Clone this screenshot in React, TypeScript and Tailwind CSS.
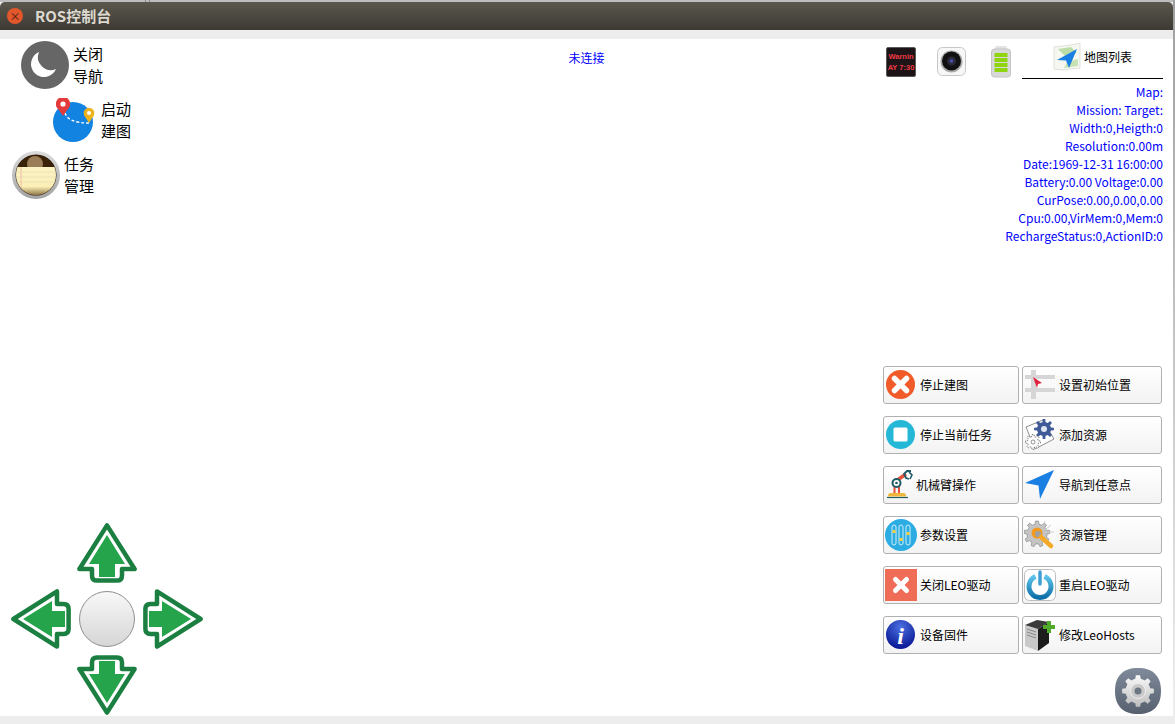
import type { ReactNode } from "react";

// builds a toothed wheel outline for the gear icons
function gearPath(cx: number, cy: number, outer: number, inner: number, teeth: number) {
  const step = (Math.PI * 2) / teeth;
  const pts: string[] = [];
  for (let i = 0; i < teeth; i++) {
    const a = i * step - Math.PI / 2;
    const list: [number, number][] = [
      [inner, a - step * 0.5],
      [inner, a - step * 0.28],
      [outer, a - step * 0.17],
      [outer, a + step * 0.17],
      [inner, a + step * 0.28],
    ];
    list.forEach(([r, t]) => {
      pts.push(`${(cx + r * Math.cos(t)).toFixed(2)} ${(cy + r * Math.sin(t)).toFixed(2)}`);
    });
  }
  return `M${pts.join("L")}Z`;
}

const XMark = ({ c = 16, size = 6, w = 5 }: { c?: number; size?: number; w?: number }) => (
  <path
    d={`M${c - size} ${c - size}L${c + size} ${c + size}M${c + size} ${c - size}L${c - size} ${c + size}`}
    stroke="#fff"
    strokeWidth={w}
    strokeLinecap="round"
  />
);

const Ico = ({ children }: { children: ReactNode }) => (
  <svg viewBox="0 0 32 32" className="w-8 h-8 shrink-0">
    {children}
  </svg>
);

const StopMapIcon = () => (
  <Ico>
    <circle cx="15.5" cy="15.5" r="14.5" fill="#f15a29" />
    <XMark c={15.5} size={6} w={5.5} />
  </Ico>
);

const InitPoseIcon = () => (
  <Ico>
    <path d="M1 6H31V10H1ZM7 1H12V30H7ZM12 19H31V23H12ZM1 19H7V23H1Z" fill="#d6d6d6" />
    <path d="M9 8L18 14L14 15L13 19Z" fill="#e2203f" />
  </Ico>
);

const StopTaskIcon = () => (
  <Ico>
    <circle cx="15.5" cy="15.5" r="14.5" fill="#25b8d6" />
    <rect x="8.5" y="8.5" width="14" height="14" rx="1.5" fill="#fff" />
  </Ico>
);

const AddResIcon = () => (
  <Ico>
    <path d="M2 8L19 1L30 20L11 30Z" fill="#fff" stroke="#8f8f8f" strokeWidth="1" />
    <path d={gearPath(20, 10, 10, 7, 8)} fill="#3f5a96" />
    <circle cx="20" cy="10" r="3" fill="#dfe6f2" />
    <path d={gearPath(9, 23, 7.5, 5.5, 8)} fill="#fff" stroke="#555" strokeWidth="0.8" strokeDasharray="1.5 1" />
    <circle cx="9" cy="23" r="2" fill="#fff" stroke="#666" strokeWidth="0.7" />
  </Ico>
);

const ArmIcon = () => (
  <svg viewBox="0 0 28 32" className="w-[28px] h-8 shrink-0">
    <path d="M2 28.5H23" stroke="#1f5a66" strokeWidth="1.2" />
    <path d="M3 26.5Q3 24 6 24H18Q21 24 21 26.5V27.5H3Z" fill="#f0b73c" />
    <path d="M9.5 24V15M14 24V15" stroke="#e8503a" strokeWidth="2" />
    <path d="M11 12L21 5" stroke="#e8503a" strokeWidth="3.4" />
    <circle cx="11.5" cy="14" r="4" fill="#fff" stroke="#1f5a66" strokeWidth="2" />
    <circle cx="11.5" cy="14" r="1.3" fill="#1f5a66" />
    <path d="M26 2H22L19 5L21 9L24 10" fill="none" stroke="#1f5a66" strokeWidth="1.8" />
    <path d="M24 3L27 6L25 10" fill="none" stroke="#1f5a66" strokeWidth="1.6" />
  </svg>
);

const NavIcon = () => (
  <Ico>
    <path d="M30 1L1 14L14.5 16.5L16 30Z" fill="#1a7fe3" />
  </Ico>
);

const ParamsIcon = () => (
  <Ico>
    <circle cx="16" cy="16" r="16" fill="#2bace2" />
    {[9, 16, 23].map((x) => (
      <rect key={x} x={x - 2} y="6" width="4" height="20" rx="2" fill="none" stroke="#cfeef9" strokeWidth="1" />
    ))}
    <rect x="7.5" y="11" width="3" height="3" fill="#f4d03f" />
    <rect x="14.5" y="19" width="3" height="3" fill="#f4d03f" />
    <rect x="21.5" y="13" width="3" height="3" fill="#f4d03f" />
  </Ico>
);

const ManageIcon = () => (
  <Ico>
    <path d={gearPath(13, 15, 13, 10, 9)} fill="#c4c4c4" stroke="#7d7d7d" strokeWidth="0.6" />
    <path d="M21 2L18 9M27 6L21 11M30 13H24" stroke="#c9c9c9" strokeWidth="1" />
    <circle cx="13" cy="14" r="5.5" fill="#f29a1f" />
    <circle cx="14" cy="15" r="3" fill="#9aa0a6" />
    <path d="M17 18L27 27" stroke="#f4a928" strokeWidth="4.5" strokeLinecap="round" />
  </Ico>
);

const CloseDriverIcon = () => (
  <Ico>
    <rect x="0" y="0" width="32" height="32" fill="#ef6c57" />
    <XMark c={16} size={5.5} w={5} />
  </Ico>
);

const PowerIcon = () => (
  <Ico>
    <defs>
      <linearGradient id="pw" x1="0" y1="0" x2="0" y2="1">
        <stop offset="0" stopColor="#5ec4ea" />
        <stop offset="1" stopColor="#0f6fa8" />
      </linearGradient>
    </defs>
    <rect x="0.5" y="0.5" width="31" height="31" rx="5" fill="#fff" stroke="#bdbdbd" />
    <path d="M11.5 7.5A11 11 0 1 0 20.5 7.5" fill="none" stroke="url(#pw)" strokeWidth="5" />
    <path d="M16 3V15" stroke="#3f9fd3" strokeWidth="3.5" strokeLinecap="round" />
  </Ico>
);

const InfoIcon = () => (
  <Ico>
    <defs>
      <radialGradient id="inf" cx="0.5" cy="0.25" r="0.8">
        <stop offset="0" stopColor="#4a6fe0" />
        <stop offset="1" stopColor="#04108f" />
      </radialGradient>
    </defs>
    <circle cx="15.5" cy="15.5" r="14.5" fill="url(#inf)" />
    <text x="15.5" y="25" textAnchor="middle" fontSize="24" fontWeight="700" fontStyle="italic" fontFamily="'Liberation Serif', serif" fill="#fff">
      i
    </text>
  </Ico>
);

const ServerIcon = () => (
  <Ico>
    <path d="M1 6L14 10V32L1 27Z" fill="#c9c9c9" />
    <path d="M3 10L12 13M3 13L12 16M3 16L12 19" stroke="#777" strokeWidth="0.8" />
    <path d="M14 10L25 3V24L14 32Z" fill="#1c1c1c" />
    <path d="M1 6L13 1L25 3L14 10Z" fill="#3a3a3a" />
    <path d="M25 2V14M19 8H31" stroke="#4fa92a" strokeWidth="4" />
  </Ico>
);

const buttons: { label: string; icon: ReactNode }[] = [
  { label: "停止建图", icon: <StopMapIcon /> },
  { label: "设置初始位置", icon: <InitPoseIcon /> },
  { label: "停止当前任务", icon: <StopTaskIcon /> },
  { label: "添加资源", icon: <AddResIcon /> },
  { label: "机械臂操作", icon: <ArmIcon /> },
  { label: "导航到任意点", icon: <NavIcon /> },
  { label: "参数设置", icon: <ParamsIcon /> },
  { label: "资源管理", icon: <ManageIcon /> },
  { label: "关闭LEO驱动", icon: <CloseDriverIcon /> },
  { label: "重启LEO驱动", icon: <PowerIcon /> },
  { label: "设备固件", icon: <InfoIcon /> },
  { label: "修改LeoHosts", icon: <ServerIcon /> },
];

const infoLines = [
  "Map:",
  "Mission: Target:",
  "Width:0,Heigth:0",
  "Resolution:0.00m",
  "Date:1969-12-31 16:00:00",
  "Battery:0.00 Voltage:0.00",
  "CurPose:0.00,0.00,0.00",
  "Cpu:0.00,VirMem:0,Mem:0",
  "RechargeStatus:0,ActionID:0",
];

function Arrow({ className = "" }: { className?: string }) {
  return (
    <svg viewBox="0 0 60 60" className={`w-[60px] h-[60px] ${className}`}>
      <path
        d="M30 2.4L57.6 46H45V52.5Q45 57.6 40 57.6H20Q15 57.6 15 52.5V46H2.4Z"
        fill="#fff"
        stroke="#1c7f42"
        strokeWidth="4.5"
        strokeLinejoin="round"
      />
      <path d="M30 12L48 41H38V54H22V41H12Z" fill="#25a44b" />
    </svg>
  );
}

function MoonIcon() {
  return (
    <svg viewBox="0 0 48 48" className="w-12 h-12 shrink-0">
      <circle cx="24" cy="24" r="24" fill="#666" />
      <path d="M18 11A13 13 0 1 0 35 28A13 13 0 0 1 18 11Z" fill="#fff" />
    </svg>
  );
}

function MappingIcon() {
  return (
    <svg viewBox="0 0 44 44" className="w-11 h-11 shrink-0">
      <circle cx="20" cy="24" r="20" fill="#1283e0" />
      <path d="M12 15Q15 25 36 25" fill="none" stroke="#fff" strokeWidth="1.4" strokeDasharray="3 2" />
      <path d="M10 18L3.5 8.5A7 7 0 1 1 16.5 8.5Z" fill="#e33b3b" />
      <circle cx="10" cy="6" r="7" fill="#e33b3b" />
      <circle cx="10" cy="6" r="2.6" fill="#fff" />
      <path d="M36 25L31 17H41Z" fill="#eeb31c" />
      <circle cx="36" cy="15" r="5.3" fill="#eeb31c" />
      <circle cx="36" cy="15" r="2" fill="#fff" />
    </svg>
  );
}

function NotesIcon() {
  return (
    <svg viewBox="0 0 48 48" className="w-12 h-12 shrink-0">
      <defs>
        <linearGradient id="ring" x1="0" y1="0" x2="0" y2="1">
          <stop offset="0" stopColor="#dcdcdc" />
          <stop offset="1" stopColor="#a2a2a2" />
        </linearGradient>
        <linearGradient id="pad" x1="0" y1="0" x2="0" y2="1">
          <stop offset="0" stopColor="#fdf3c4" />
          <stop offset="0.65" stopColor="#fbeeb6" />
          <stop offset="1" stopColor="#7a5f30" />
        </linearGradient>
        <clipPath id="face">
          <circle cx="24" cy="24" r="20" />
        </clipPath>
      </defs>
      <circle cx="24" cy="24" r="24" fill="url(#ring)" />
      <circle cx="24" cy="24" r="20.5" fill="#2c1808" />
      <g clipPath="url(#face)">
        <rect x="2" y="4" width="44" height="13" fill="#3a2209" />
        <circle cx="23" cy="13" r="8" fill="#9b7d58" />
        <rect x="2" y="16" width="44" height="30" fill="url(#pad)" />
        <path d="M2 21H46M2 26H46M2 31H46" stroke="#e6e0b6" strokeWidth="0.8" />
        <path d="M9 16V44" stroke="#eeb2a0" strokeWidth="0.8" />
      </g>
    </svg>
  );
}

function WarnIcon() {
  return (
    <div className="w-[30px] h-[30px] bg-[#1c1416] border border-[#5a5a5a] rounded-[2px] flex flex-col justify-center items-center text-[#ee3a45] text-[7.5px] leading-[11px] font-bold font-['Liberation_Sans',sans-serif] whitespace-nowrap">
      <span>Warnin</span>
      <span>AY 7:30</span>
    </div>
  );
}

function CameraIcon() {
  return (
    <svg viewBox="0 0 29 29" className="w-[29px] h-[29px]">
      <rect x="0.5" y="0.5" width="28" height="28" rx="5" fill="#f7f7f7" stroke="#c8c8c8" />
      <circle cx="14.5" cy="14.5" r="11" fill="#aaa" />
      <circle cx="14.5" cy="14" r="9.5" fill="#111" />
      <circle cx="14.5" cy="14" r="4.5" fill="#2a2a3a" />
      <circle cx="14.5" cy="14" r="1.8" fill="#4a4fb0" />
    </svg>
  );
}

function BatteryIcon() {
  return (
    <svg viewBox="0 0 22 32" className="w-[22px] h-8">
      <rect x="5" y="0" width="12" height="5" rx="2" fill="#e2e2e2" />
      <rect x="1.5" y="3" width="19" height="28" rx="3" fill="#d8d8d8" stroke="#c4c4c4" />
      {[7, 12, 17, 22].map((y) => (
        <rect key={y} x="4.5" y={y} width="13" height="4" fill="#8fd40e" />
      ))}
    </svg>
  );
}

function MapIcon() {
  return (
    <svg viewBox="0 0 28 28" className="w-7 h-7 shrink-0">
      <path d="M1 4L18 2L27 0V25L9 27L1 26Z" fill="#f7f7f2" stroke="#d4d4d0" strokeWidth="0.7" />
      <path d="M5 6L18 4L24 10L12 13Z" fill="#bcdca8" />
      <path d="M14 19L25 16V23L11 25Z" fill="#c6e2b4" />
      <path d="M24 6L4 17L13 17.5L16 25Z" fill="#1a7fe3" />
    </svg>
  );
}

function SettingsIcon() {
  return (
    <svg viewBox="0 0 46 46" className="w-[46px] h-[46px]">
      <defs>
        <linearGradient id="sq" x1="0" y1="0" x2="0" y2="1">
          <stop offset="0" stopColor="#7f8a9a" />
          <stop offset="1" stopColor="#56606f" />
        </linearGradient>
        <linearGradient id="sl" x1="0" y1="0" x2="0" y2="1">
          <stop offset="0" stopColor="#fafafa" />
          <stop offset="1" stopColor="#bdbdbd" />
        </linearGradient>
      </defs>
      <path d="M23 0C38 0 46 8 46 23S38 46 23 46S0 38 0 23S8 0 23 0Z" fill="url(#sq)" />
      <path d={gearPath(23, 23, 16, 12.5, 8)} fill="url(#sl)" />
      <circle cx="23" cy="23" r="7.5" fill="#c9c9c9" stroke="#eee" />
      <circle cx="23" cy="23" r="3.5" fill="#6d7683" />
    </svg>
  );
}

function NavItem({
  icon,
  top,
  bottom,
  className = "",
  textClass = "",
}: {
  icon: ReactNode;
  top: string;
  bottom: string;
  className?: string;
  textClass?: string;
}) {
  return (
    <div className={`flex items-start gap-1 ${className}`}>
      {icon}
      <div className={`text-[15px] leading-[22px] text-black ${textClass}`}>
        <div>{top}</div>
        <div>{bottom}</div>
      </div>
    </div>
  );
}

export default function App() {
  return (
    <div className="w-[1175px] h-[724px] flex overflow-hidden bg-white font-['Noto_Sans_CJK_SC','Noto_Sans',sans-serif]">
      <div className="w-[1173px] h-full flex flex-col bg-[#ededed]">
        {/* strip of the desktop above the window */}
        <div className="h-[2px] bg-[#bdbdbd] shrink-0 flex">
          <div className="ml-[145px] w-px bg-[#8a8a8a]" />
          <div className="ml-[3px] w-px bg-[#8a8a8a]" />
        </div>

        <div className="h-[28px] shrink-0 flex items-center rounded-t-[5px] bg-gradient-to-b from-[#5b574e] to-[#3c3a33]">
          <div className="ml-[7px] w-4 h-4 rounded-full bg-[#e2572b] flex items-center justify-center text-[#40190c] text-[11px] leading-none">
            ×
          </div>
          <span className="ml-3 text-[15px] font-bold text-[#dcd9d0]">ROS控制台</span>
        </div>
        <div className="h-[9px] shrink-0" />

        <div className="h-[677px] flex bg-white">
          {/* left: mode buttons and joystick */}
          <div className="w-[290px] flex flex-col">
            <NavItem className="mt-[2px] ml-[21px]" textClass="mt-[2px]" icon={<MoonIcon />} top="关闭" bottom="导航" />
            <NavItem className="mt-[9px] ml-[53px] -mb-[2px]" icon={<MappingIcon />} top="启动" bottom="建图" />
            <NavItem className="mt-[11px] ml-[12px]" textClass="mt-[2px]" icon={<NotesIcon />} top="任务" bottom="管理" />

            <div className="mt-auto mb-px ml-[11px] grid grid-cols-[60px_60px_60px] grid-rows-[60px_60px_60px] gap-[6px]">
              <Arrow className="col-start-2" />
              <Arrow className="col-start-1 row-start-2 -rotate-90" />
              <div className="col-start-2 row-start-2 place-self-center w-14 h-14 rounded-full border border-[#8f8f8f] bg-gradient-to-b from-[#f8f8f8] to-[#d6d6d6]" />
              <Arrow className="col-start-3 row-start-2 rotate-90" />
              <Arrow className="col-start-2 row-start-3 rotate-180" />
            </div>
          </div>

          <div className="flex-1 flex justify-center pt-[10px]">
            <span className="text-xs leading-[18px] text-[#0000ff]">未连接</span>
          </div>

          {/* right: status and actions */}
          <div className="w-[290px] flex flex-col">
            <div className="flex items-start h-[40px] pr-[10px]">
              <div className="mt-[8px] ml-[3px]">
                <WarnIcon />
              </div>
              <div className="mt-[8px] ml-[21px]">
                <CameraIcon />
              </div>
              <div className="mt-[7px] ml-[24px]">
                <BatteryIcon />
              </div>
              <div className="ml-[10px] flex-1 h-[40px] border-b border-black flex items-center pl-[31px] gap-[3px] pb-[3px]">
                <MapIcon />
                <span className="text-xs text-black">地图列表</span>
              </div>
            </div>

            <div className="mt-[4px] pr-[10px] text-right text-xs leading-[18px] text-[#0000ff]">
              {infoLines.map((line) => (
                <div key={line}>{line}</div>
              ))}
            </div>

            <div className="mt-auto grid grid-cols-[136px_140px] gap-x-[3px] gap-y-3">
              {buttons.map((b) => (
                <button
                  key={b.label}
                  className="h-[38px] flex items-center gap-[3px] pl-px border border-[#b0b0b0] rounded-[3px] bg-gradient-to-b from-white to-[#f3f3f3] text-xs text-black whitespace-nowrap"
                >
                  {b.icon}
                  <span>{b.label}</span>
                </button>
              ))}
            </div>

            <div className="mt-[14px] mb-[2px] pr-3 flex justify-end">
              <SettingsIcon />
            </div>
          </div>
        </div>

        <div className="flex-1" />
      </div>
      <div className="w-[2px] h-full bg-gradient-to-b from-[#9f9f9f] to-[#efefef]" />
    </div>
  );
}
